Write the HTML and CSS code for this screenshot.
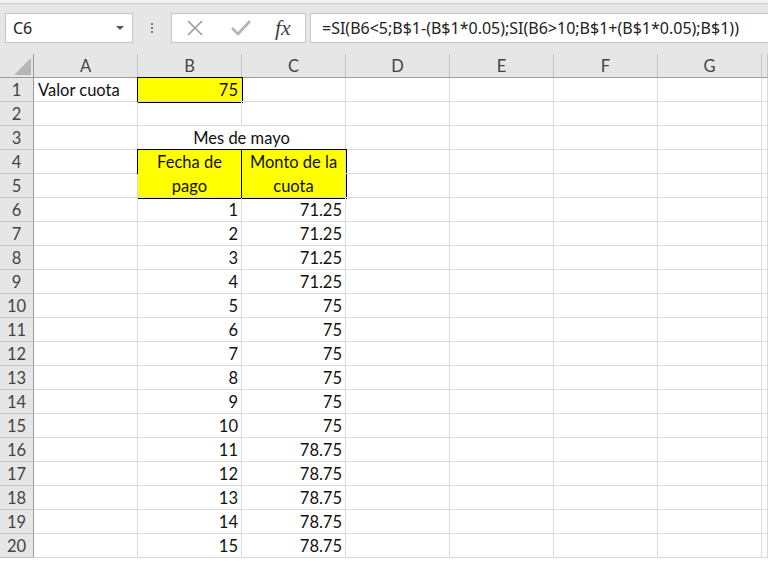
FILE: index.html
```html
<!DOCTYPE html>
<html lang="es">
<head>
    <meta charset="UTF-8">
    <meta name="viewport" content="width=device-width, initial-scale=1.0">
    <title>Cuotas - mayo</title>
    <link rel="stylesheet" href="styles.css">
</head>
<body>
    <div class="top-strip"></div>
    <div class="formula-bar">
        <div class="name-box">C6<span class="caret"></span></div>
        <div class="grip"><span></span><span></span><span></span></div>
        <div class="fx-buttons">
            <svg width="18" height="18" viewBox="0 0 18 18"><path d="M2 2L16 16M16 2L2 16" stroke="#9c9c9c" stroke-width="1.6" fill="none"/></svg>
            <svg width="22" height="18" viewBox="0 0 22 18"><path d="M2 9L8 15L20 2" stroke="#b4b4b4" stroke-width="2.6" fill="none"/></svg>
            <span class="fx">fx</span>
        </div>
        <div class="formula">=SI(B6&lt;5;B$1-(B$1*0.05);SI(B6&gt;10;B$1+(B$1*0.05);B$1))</div>
    </div>

    <div class="sheet">
        <div class="corner"><span></span></div>
        <div class="ch">A</div><div class="ch">B</div><div class="ch">C</div><div class="ch">D</div>
        <div class="ch">E</div><div class="ch">F</div><div class="ch">G</div><div class="ch"></div>

        <div class="rh">1</div><div class="txt">Valor cuota</div><div class="num box">75</div>
        <div></div><div></div><div></div><div></div><div></div><div></div>

        <div class="rh">2</div><div></div><div></div><div></div>
        <div></div><div></div><div></div><div></div><div></div>

        <div class="rh">3</div><div></div><div class="title">Mes de mayo</div>
        <div></div><div></div><div></div><div></div><div></div>

        <div class="rh">4</div><div></div>
        <div class="head box">Fecha de<br>pago</div>
        <div class="head box">Monto de la<br>cuota</div>
        <div></div><div></div><div></div><div></div><div></div>

        <div class="rh">5</div><div></div>
        <div></div><div></div><div></div><div></div><div></div>

        <div class="rh">6</div><div></div><div class="num">1</div><div class="num">71.25</div>
        <div></div><div></div><div></div><div></div><div></div>
        <div class="rh">7</div><div></div><div class="num">2</div><div class="num">71.25</div>
        <div></div><div></div><div></div><div></div><div></div>
        <div class="rh">8</div><div></div><div class="num">3</div><div class="num">71.25</div>
        <div></div><div></div><div></div><div></div><div></div>
        <div class="rh">9</div><div></div><div class="num">4</div><div class="num">71.25</div>
        <div></div><div></div><div></div><div></div><div></div>
        <div class="rh">10</div><div></div><div class="num">5</div><div class="num">75</div>
        <div></div><div></div><div></div><div></div><div></div>
        <div class="rh">11</div><div></div><div class="num">6</div><div class="num">75</div>
        <div></div><div></div><div></div><div></div><div></div>
        <div class="rh">12</div><div></div><div class="num">7</div><div class="num">75</div>
        <div></div><div></div><div></div><div></div><div></div>
        <div class="rh">13</div><div></div><div class="num">8</div><div class="num">75</div>
        <div></div><div></div><div></div><div></div><div></div>
        <div class="rh">14</div><div></div><div class="num">9</div><div class="num">75</div>
        <div></div><div></div><div></div><div></div><div></div>
        <div class="rh">15</div><div></div><div class="num">10</div><div class="num">75</div>
        <div></div><div></div><div></div><div></div><div></div>
        <div class="rh">16</div><div></div><div class="num">11</div><div class="num">78.75</div>
        <div></div><div></div><div></div><div></div><div></div>
        <div class="rh">17</div><div></div><div class="num">12</div><div class="num">78.75</div>
        <div></div><div></div><div></div><div></div><div></div>
        <div class="rh">18</div><div></div><div class="num">13</div><div class="num">78.75</div>
        <div></div><div></div><div></div><div></div><div></div>
        <div class="rh">19</div><div></div><div class="num">14</div><div class="num">78.75</div>
        <div></div><div></div><div></div><div></div><div></div>
        <div class="rh">20</div><div></div><div class="num">15</div><div class="num">78.75</div>
        <div></div><div></div><div></div><div></div><div></div>
    </div>
</body>
</html>
```

FILE: styles.css
```css
* {
    box-sizing: border-box;
}
body {
    margin: 0;
    background-color: #ffffff;
    font-family: 'Lato', 'Liberation Sans', sans-serif;
    overflow: hidden;
}
.top-strip {
    height: 4px;
    background-color: #f3f3f3;
    border-bottom: 1px solid #cfcfcf;
}
.formula-bar {
    height: 50px;
    background-color: #e6e6e6;
    display: flex;
    align-items: flex-start;
    padding-top: 9px;
    font-family: 'Noto Sans', 'Open Sans', sans-serif;
    font-size: 16px;
    color: #222;
}
.name-box {
    margin-left: 5px;
    width: 128px;
    height: 30px;
    background-color: white;
    border: 1px solid #c6c6c6;
    display: flex;
    align-items: center;
    justify-content: space-between;
    padding: 0 8px 0 7px;
}
.caret {
    width: 0;
    height: 0;
    border-left: 4px solid transparent;
    border-right: 4px solid transparent;
    border-top: 4px solid #555;
}
.grip {
    width: 38px;
    height: 30px;
    display: flex;
    flex-direction: column;
    align-items: center;
    justify-content: center;
    gap: 2px;
}
.grip span {
    width: 2px;
    height: 2px;
    background-color: #777;
}
.fx-buttons {
    width: 135px;
    height: 30px;
    background-color: white;
    border: 1px solid #c6c6c6;
    display: flex;
    align-items: center;
    padding-left: 14px;
    gap: 26px;
}
.fx {
    font-family: 'Liberation Serif', serif;
    font-style: italic;
    font-size: 22px;
    color: #444;
    margin-left: -3px;
}
.formula {
    flex: 1;
    margin-left: 4px;
    height: 30px;
    background-color: white;
    border: 1px solid #c6c6c6;
    border-right: none;
    line-height: 28px;
    padding-left: 11px;
    white-space: nowrap;
}
.sheet {
    display: grid;
    grid-template-columns: 34px repeat(7, 104px) 1fr;
    grid-template-rows: 24px repeat(20, 24px);
    font-size: 16.5px;
    color: #111;
}
.sheet > div {
    border-right: 1px solid #dadada;
    border-bottom: 1px solid #dadada;
    line-height: 24px;
    white-space: nowrap;
}
.sheet > .ch {
    background-color: #e6e6e6;
    border-right-color: #c4c4c4;
    border-bottom-color: #9b9b9b;
    text-align: center;
    color: #444;
}
.sheet > .corner {
    background-color: #e6e6e6;
    border-right-color: #9b9b9b;
    border-bottom-color: #9b9b9b;
    display: flex;
    align-items: flex-end;
    justify-content: flex-end;
    padding: 0 2px 2px 0;
}
.corner span {
    width: 17px;
    height: 17px;
    background-color: #b6b6b6;
    clip-path: polygon(100% 0, 100% 100%, 0 100%);
}
.sheet > .rh {
    background-color: #e6e6e6;
    border-right-color: #9b9b9b;
    border-bottom-color: #c4c4c4;
    text-align: center;
    color: #444;
}
.txt {
    padding-left: 4px;
}
.num {
    text-align: right;
    padding-right: 3px;
}
.title {
    grid-column: span 2;
    text-align: center;
}
.head {
    grid-row: span 2;
    text-align: center;
}
.sheet > .box {
    background-color: #ffff00;
    outline: 1px solid #000;
}
```
